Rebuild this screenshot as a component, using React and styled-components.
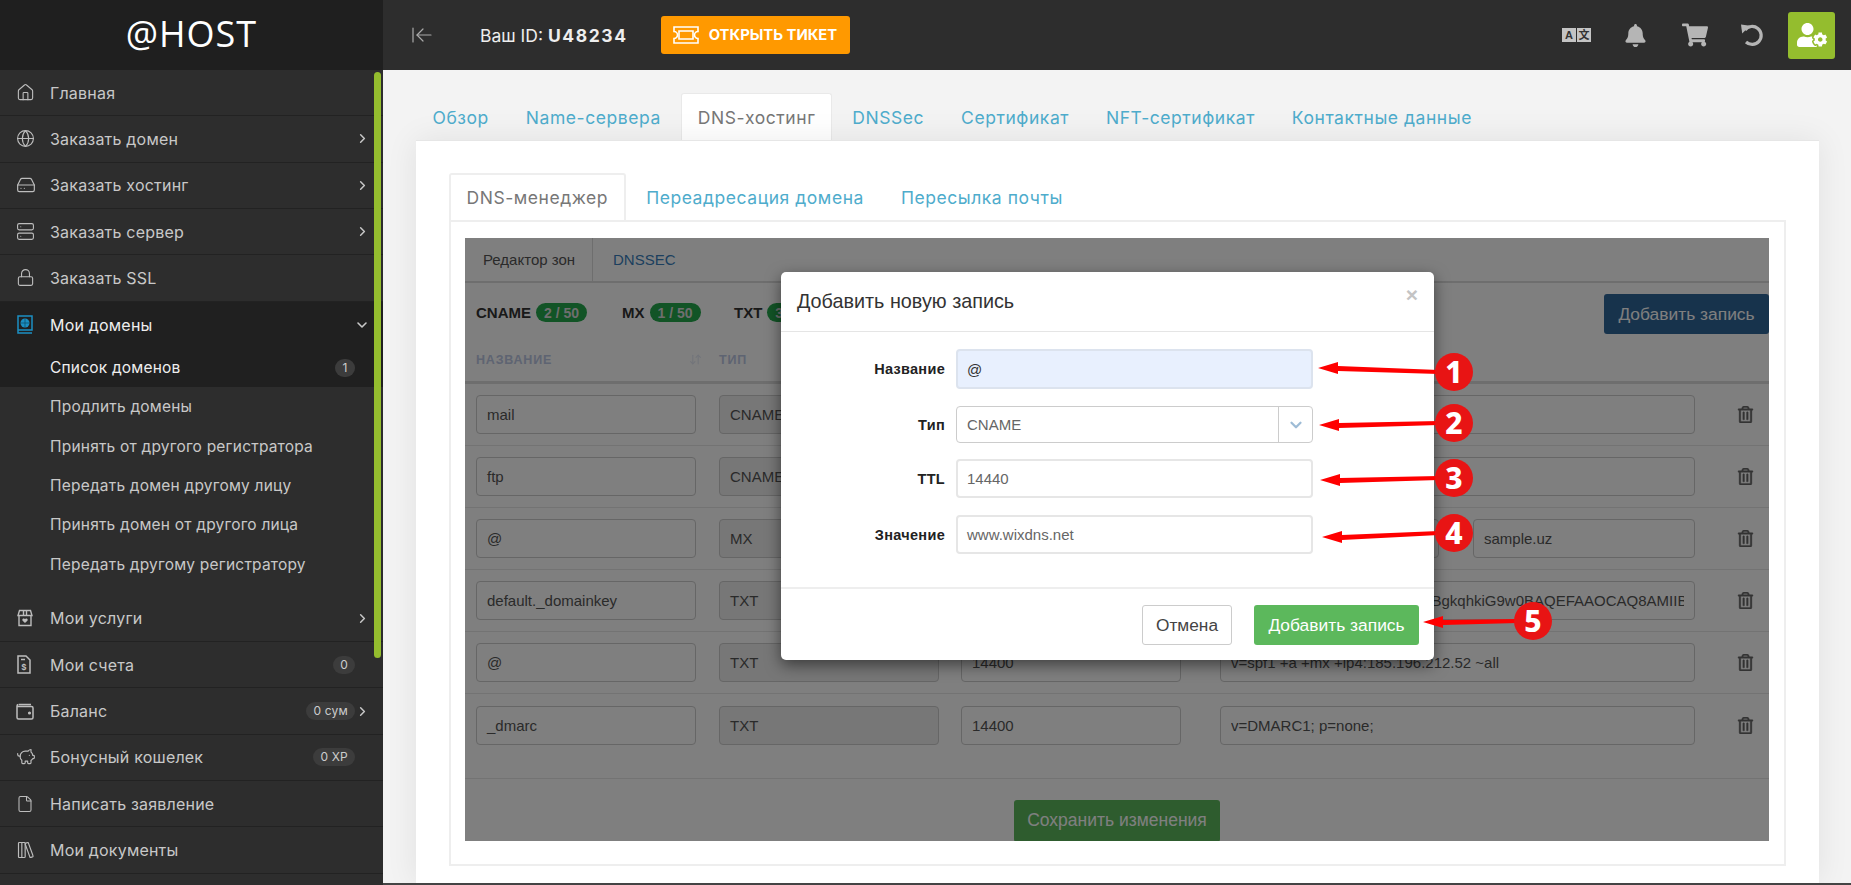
import React from 'react';
import styled, { createGlobalStyle } from 'styled-components';
import {
  House, Globe, HardDrive, Server, Lock, PiggyBank, File, LibraryBig,
  ChevronRight, ChevronDown, ArrowLeftToLine, ArrowDownUp,
} from 'lucide-react';
import { FaBell, FaShoppingCart, FaUserCog, FaRegTrashAlt } from 'react-icons/fa';

const GlobalStyle = createGlobalStyle`
  html, body { margin: 0; padding: 0; height: 100%; overflow: hidden; }
  body { font-family: "Liberation Sans", Arial, sans-serif; background: #f3f3f3; }
  * { box-sizing: border-box; }
`;

const UI = '"Inter", "Open Sans", sans-serif';

const Page = styled.div`
  display: flex;
  width: 1851px;
  height: 885px;
  overflow: hidden;
`;

/* ---------- sidebar ---------- */
const Sidebar = styled.aside`
  position: relative;
  flex: 0 0 383px;
  height: 885px;
  background: #2d2d2d;
  overflow: hidden;
  font-family: ${UI};
`;
const Logo = styled.div`
  height: 70px;
  background: #1f1f1f;
  color: #fff;
  font-family: "Open Sans", sans-serif;
  font-size: 36px;
  letter-spacing: 1px;
  line-height: 67px;
  text-align: center;
`;
const Scroll = styled.div`
  position: absolute;
  left: 374px;
  top: 72px;
  width: 7px;
  height: 586px;
  border-radius: 4px;
  background: #94bd2e;
`;
const NavRow = styled.div`
  display: flex;
  align-items: center;
  height: ${(p) => p.$h || 46.33}px;
  padding: 0 13px 0 16px;
  border-bottom: ${(p) => (p.$flat ? 'none' : '1px solid #222')};
  color: ${(p) => (p.$active ? '#eee' : '#c8c8c8')};
  background: ${(p) => (p.$active ? '#202020' : 'transparent')};
  font-size: 16px;
  letter-spacing: .2px;
  svg { flex: none; }
`;
const NavIcon = styled.span`
  display: flex;
  width: 34px;
  color: #bdbdbd;
`;
const NavText = styled.span`
  flex: 1;
  white-space: nowrap;
`;
const Count = styled.span`
  height: 18px;
  min-width: 20px;
  margin-right: 15px;
  padding: 0 7px;
  border-radius: 9px;
  background: #3c3c3c;
  color: #ccc;
  font-size: 12px;
  line-height: 18px;
  text-align: center;
`;
const CountArrow = styled(Count)`
  margin-right: 0;
`;
const Arrow = styled(ChevronRight)`
  color: #c8c8c8;
  margin-left: auto;
`;
const Open = styled(ChevronDown)`
  color: #c8c8c8;
  margin-left: auto;
`;
const SubList = styled.div`
  padding-bottom: 12px;
`;
const SubRow = styled(NavRow)`
  height: 39.3px;
  padding-left: 50px;
  font-size: 15.5px;
`;

const BookGlobe = () => (
  <svg width="18" height="20" viewBox="0 0 18 20" fill="none" stroke="#1b8fc2" strokeWidth="1.5">
    <path d="M2 1h14v14H2zM2 15v3h14" />
    <circle cx="9" cy="8" r="4.5" fill="#1b8fc2" stroke="none" />
    <path d="M4.5 8h9M9 3.5v9" stroke="#0c4a66" strokeWidth=".7" />
  </svg>
);
const GiftHeart = () => (
  <svg width="18" height="18" viewBox="0 0 18 18" fill="none" stroke="currentColor" strokeWidth="1.4">
    <path d="M3.5 1.5h11L16 6.5H2zM3 6.5h12v10H3zM7.5 1.5v5M10.5 1.5v5" />
    <path d="M9 14l-2.6-2.6a1.5 1.5 0 0 1 2.6-1.4 1.5 1.5 0 0 1 2.6 1.4z" fill="currentColor" stroke="none" />
  </svg>
);
const Receipt = () => (
  <svg width="16" height="19" viewBox="0 0 16 19" fill="none" stroke="currentColor" strokeWidth="1.5">
    <path d="M2 1h8l4 4v13H2zM5 4.5h4" />
    <text x="8" y="15" fontSize="8" fontWeight="700" fill="currentColor" stroke="none" textAnchor="middle">$</text>
  </svg>
);
const Wallet = () => (
  <svg width="18" height="17" viewBox="0 0 18 17" fill="none" stroke="currentColor" strokeWidth="1.5">
    <path d="M3 1.5h12M2.5 1.5A1.5 1.5 0 0 0 1 3v11.5A1.5 1.5 0 0 0 2.5 16h13a1.5 1.5 0 0 0 1.5-1.5V5a1.5 1.5 0 0 0-1.5-1.5H1" />
    <circle cx="13.5" cy="10" r=".8" fill="currentColor" />
  </svg>
);

/* ---------- top bar ---------- */
const Main = styled.main`
  flex: 1;
  min-width: 0;
  display: flex;
  flex-direction: column;
  height: 885px;
`;
const TopBar = styled.header`
  flex: 0 0 70px;
  display: flex;
  align-items: center;
  padding: 0 16px 0 27px;
  background: #2d2d2d;
  color: #eee;
  font-family: ${UI};
`;
const Collapse = styled(ArrowLeftToLine)`
  color: #aaa;
`;
const YourId = styled.span`
  margin-left: 46px;
  font-size: 17.5px;
  b { font-weight: 700; letter-spacing: 1.6px; }
`;
const TicketBtn = styled.div`
  display: flex;
  align-items: center;
  gap: 10px;
  height: 38px;
  margin-left: 33px;
  padding: 0 13px 0 12px;
  border-radius: 3px;
  background: #ff9900;
  color: #fff;
  font-size: 14.8px;
  font-weight: 700;
  white-space: nowrap;
`;
const TopIcons = styled.div`
  display: flex;
  align-items: center;
  margin-left: auto;
  color: #b5b5b5;
`;
const TopIcon = styled.span`
  display: flex;
  justify-content: center;
  width: ${(p) => p.$w}px;
`;
const LangBox = styled.span`
  display: inline-block;
  width: 14px;
  height: 14px;
  margin-left: 1px;
  background: #c4c4c4;
  color: #333;
  font: 700 11px/14px "Liberation Sans", "Noto Sans CJK SC", sans-serif;
  text-align: center;
`;
const UserBtn = styled.div`
  display: flex;
  align-items: center;
  justify-content: center;
  width: 47px;
  height: 47px;
  margin-left: 9px;
  border-radius: 3px;
  background: #94bd2e;
  color: #fff;
`;

/* ---------- tabs + card ---------- */
const Content = styled.div`
  flex: 1;
  min-height: 0;
  padding: 23px 32px 0 33px;
  background: #f3f3f3;
  display: flex;
  flex-direction: column;
`;
const Tabs = styled.div`
  display: flex;
  flex: none;
  height: 47px;
  font-family: ${UI};
  font-size: 17.5px;
  letter-spacing: .55px;
`;
const Tab = styled.div`
  display: flex;
  align-items: center;
  height: 47px;
  margin-right: 4px;
  padding: 0 15.5px;
  color: ${(p) => (p.$active ? '#777' : '#4eaccc')};
  background: ${(p) => (p.$active ? '#fff' : 'transparent')};
  border-radius: 3px 3px 0 0;
  border: ${(p) => (p.$active ? p.$line || '1px solid #e9e9e9' : '1px solid transparent')};
  border-bottom: none;
  white-space: nowrap;
`;
const Card = styled.section`
  flex: 1;
  min-height: 0;
  padding: 32px 33px 33px;
  background: #fff;
  border-top: 1px solid #e6e6e6;
  box-shadow: 0 0 30px rgba(0, 0, 0, .08);
`;
const InnerPanel = styled.div`
  height: 646px;
  padding: 16px 15px 25px 14px;
  border: 2px solid #eee;
`;
const Footer = styled.div`
  flex: 0 0 2px;
  margin: 0 -32px 0 -33px;
  background: #444;
`;

/* ---------- dimmed zone editor ---------- */
const Zone = styled.div`
  position: relative;
  height: 603px;
  overflow: hidden;
  background: #fff;
  color: #333;
`;
const Backdrop = styled.div`
  position: absolute;
  inset: 0;
  background: rgba(0, 0, 0, .5);
`;
const ZoneTabs = styled.div`
  display: flex;
  height: 45px;
  border-bottom: 2px solid #ddd;
  font-size: 15px;
`;
const ZoneTab = styled.div`
  display: flex;
  align-items: center;
  padding: 0 20px 0 ${(p) => (p.$active ? 18 : 20)}px;
  width: ${(p) => (p.$active ? '128px' : 'auto')};
  border-right: ${(p) => (p.$active ? '1px solid #ddd' : 'none')};
  color: ${(p) => (p.$active ? '#555' : '#387ebd')};
  white-space: nowrap;
`;
const Stats = styled.div`
  display: flex;
  align-items: flex-start;
  height: 57px;
  padding: 11px 0 0 11px;
  font-size: 15px;
  font-weight: 700;
`;
const Stat = styled.div`
  display: flex;
  align-items: center;
  height: 36px;
  gap: 5px;
  width: ${(p) => p.$w}px;
`;
const Pill = styled.span`
  height: 19px;
  padding: 0 8px;
  border-radius: 10px;
  background: #24a84c;
  color: #ddd;
  font-size: 14px;
  line-height: 20px;
  white-space: nowrap;
`;
const AddBtn = styled.div`
  margin-left: auto;
  width: 165px;
  height: 40px;
  border-radius: 3px;
  background: #2e6699;
  color: #fff;
  font-size: 17.4px;
  font-weight: 400;
  line-height: 40px;
  text-align: center;
`;
const HeadRow = styled.div`
  position: relative;
  display: grid;
  grid-template-columns: 243px 1fr;
  align-items: center;
  height: 44px;
  padding: 0 0 1px 11px;
  border-bottom: 3px solid #ddd;
  color: #bcc8e4;
  font-size: 12.5px;
  font-weight: 700;
  letter-spacing: .8px;
`;
const HeadCell = styled.div`
  display: flex;
  justify-content: space-between;
  width: 226px;
  svg { opacity: .4; }
`;
const Row = styled.div`
  display: grid;
  grid-template-columns: 243px 242px 259px 475px 1fr;
  align-items: center;
  height: ${(p) => p.$h || 62}px;
  padding: ${(p) => (p.$last ? '12px 0 33px 11px' : '0 0 0 11px')};
  border-bottom: 1px solid #e6e6e6;
  font-size: 15px;
`;
const Field = styled.div`
  width: ${(p) => p.$w || 220}px;
  height: 39px;
  padding: 0 10px;
  border: 1px solid #ccc;
  border-radius: 4px;
  background: ${(p) => (p.$off ? '#eee' : '#fff')};
  color: #555;
  line-height: 38px;
  white-space: nowrap;
  overflow: hidden;
`;
const ValueField = styled(Field)`
  width: 475px;
`;
const ClipText = styled.div`
  overflow: hidden;
`;
const PairField = styled.div`
  display: flex;
  justify-content: space-between;
  width: 475px;
`;
const Trash = styled(FaRegTrashAlt)`
  justify-self: start;
  margin-left: 42px;
  color: #666;
  stroke: currentColor;
  stroke-width: 12;
`;
const SaveWrap = styled.div`
  display: flex;
  justify-content: center;
  padding-top: 21px;
`;
const SaveBtn = styled.div`
  width: 206px;
  height: 42px;
  border-radius: 3px;
  background: #5cb85c;
  color: #fff;
  font-size: 17.5px;
  line-height: 40px;
  text-align: center;
`;

/* ---------- modal ---------- */
const Modal = styled.div`
  position: absolute;
  left: 316px;
  top: 34px;
  width: 653px;
  height: 388px;
  display: flex;
  flex-direction: column;
  border-radius: 5px;
  background: #fff;
  box-shadow: 0 5px 15px rgba(0, 0, 0, .5);
`;
const ModalHead = styled.div`
  display: flex;
  align-items: center;
  justify-content: space-between;
  flex: 0 0 60px;
  padding: 0 16px 0 16px;
  border-bottom: 1px solid #e5e5e5;
  color: #333;
  font-size: 19.8px;
`;
const Close = styled.span`
  margin-top: -14px;
  color: #c4c4c4;
  font-size: 21px;
  font-weight: 700;
`;
const ModalBody = styled.div`
  flex: 1;
  padding-top: 17px;
`;
const FormRow = styled.div`
  display: flex;
  align-items: center;
  height: ${(p) => p.$h}px;
  margin-bottom: ${(p) => p.$mb}px;
`;
const FormLabel = styled.div`
  width: 164px;
  margin-right: 11px;
  color: #222;
  font-size: 14.5px;
  font-weight: 700;
  letter-spacing: .3px;
  text-align: right;
`;
const FormInput = styled.div`
  display: flex;
  align-items: center;
  width: 357px;
  height: 100%;
  padding-left: 9px;
  border: 2px solid ${(p) => (p.$filled ? '#dce3ee' : '#e6e6e6')};
  border-radius: 4px;
  background: ${(p) => (p.$filled ? '#e8f0fe' : '#fff')};
  color: ${(p) => (p.$filled ? '#333' : '#666')};
  font-size: 15px;
`;
const SelectBox = styled(FormInput)`
  border: 1px solid #ccc;
  padding-left: 10px;
  padding-right: 0;
`;
const SelectArrow = styled.span`
  display: flex;
  align-items: center;
  justify-content: center;
  width: 34px;
  height: 100%;
  margin-left: auto;
  border-left: 1px solid #ccc;
  color: #9ebcd6;
`;
const ModalFoot = styled.div`
  display: flex;
  justify-content: flex-end;
  align-items: flex-start;
  gap: 22px;
  flex: 0 0 73px;
  padding: 16px 15px 0 0;
  border-top: 2px solid #eee;
`;
const CancelBtn = styled.div`
  width: 90px;
  height: 40px;
  border: 1px solid #ccc;
  border-radius: 3px;
  color: #444;
  font-size: 17.3px;
  line-height: 38px;
  text-align: center;
`;
const ConfirmBtn = styled.div`
  width: 165px;
  height: 40px;
  border-radius: 3px;
  background: #5cb85c;
  color: #fff;
  font-size: 17.4px;
  line-height: 40px;
  text-align: center;
`;

/* ---------- red numbered callouts ---------- */
const ArrowLayer = styled.svg`
  position: absolute;
  left: 0;
  top: 0;
  width: 100%;
  height: 100%;
  pointer-events: none;
`;
const Callout = styled.div`
  position: absolute;
  left: ${(p) => p.$x - 19}px;
  top: ${(p) => p.$y - 19}px;
  width: 38px;
  height: 38px;
  border-radius: 50%;
  background: #e81414;
  color: #fff;
  font-family: "Noto Sans", sans-serif;
  font-size: 30px;
  font-weight: 800;
  line-height: 38px;
  text-align: center;
`;

const Ticket = () => (
  <svg width="26" height="18" viewBox="0 0 26 18" fill="none" stroke="#fff" strokeWidth="1.6">
    <path d="M1 1h24v4.5a3.5 3.5 0 0 0 0 7V17H1v-4.5a3.5 3.5 0 0 0 0-7z" />
    <path d="M6 5h14v8H6z" />
  </svg>
);
const Undo = () => (
  <svg width="26" height="26" viewBox="0 0 26 26" fill="none" stroke="currentColor" strokeWidth="3.2">
    <path d="M6 8a9 9 0 1 1 1 12" />
    <path d="M2 2.5l9 1.2-7.8 7.8z" fill="currentColor" stroke="none" />
  </svg>
);

const topItems = [
  { icon: <House size={19} strokeWidth={1.4} />, label: 'Главная' },
  { icon: <Globe size={19} strokeWidth={1.4} />, label: 'Заказать домен', more: true },
  { icon: <HardDrive size={20} strokeWidth={1.4} />, label: 'Заказать хостинг', more: true },
  { icon: <Server size={19} strokeWidth={1.4} />, label: 'Заказать сервер', more: true },
  { icon: <Lock size={19} strokeWidth={1.4} />, label: 'Заказать SSL' },
];
const subItems = ['Продлить домены', 'Принять от другого регистратора', 'Передать домен другому лицу', 'Принять домен от другого лица', 'Передать другому регистратору'];
const bottomItems = [
  { icon: <GiftHeart />, label: 'Мои услуги', more: true },
  { icon: <Receipt />, label: 'Мои счета', badge: '0' },
  { icon: <Wallet />, label: 'Баланс', badge: '0 сум', more: true },
  { icon: <PiggyBank size={20} strokeWidth={1.4} />, label: 'Бонусный кошелек', badge: '0 XP' },
  { icon: <File size={18} strokeWidth={1.4} />, label: 'Написать заявление' },
  { icon: <LibraryBig size={20} strokeWidth={1.4} />, label: 'Мои документы' },
];

const records = [
  { name: 'mail', type: 'CNAME', ttl: '14400', value: '@' },
  { name: 'ftp', type: 'CNAME', ttl: '14400', value: '@' },
  { name: '@', type: 'MX', ttl: '14400', prio: '10', value: 'sample.uz' },
  { name: 'default._domainkey', type: 'TXT', ttl: '14400', value: 'v=DKIM1; k=rsa1; p=MIIBIjANBgkqhkiG9w0BAQEFAAOCAQ8AMIIBCgKCAQEA' },
  { name: '@', type: 'TXT', ttl: '14400', value: 'v=spf1 +a +mx +ip4:185.196.212.52 ~all' },
  { name: '_dmarc', type: 'TXT', ttl: '14400', value: 'v=DMARC1; p=none;' },
];

// coordinates are relative to the dimmed zone
const marks = [
  { n: 1, x: 989, y: 134, tipX: 853, tipY: 130 },
  { n: 2, x: 989, y: 185, tipX: 854, tipY: 187 },
  { n: 3, x: 989, y: 240, tipX: 855, tipY: 242 },
  { n: 4, x: 989, y: 295, tipX: 857, tipY: 299 },
  { n: 5, x: 1068, y: 383, tipX: 958, tipY: 384 },
];

const arrowShape = (m) => {
  const left = m.x - 15;
  const head = m.tipX + 20;
  return `${m.tipX},${m.tipY} ${head},${m.tipY - 6} ${head},${m.tipY - 2} ${left},${m.y - 2} ${left},${m.y + 2} ${head},${m.tipY + 3} ${head},${m.tipY + 6}`;
};

const NavItem = ({ item }) => (
  <NavRow>
    <NavIcon>{item.icon}</NavIcon>
    <NavText>{item.label}</NavText>
    {item.badge && (item.more ? <CountArrow>{item.badge}</CountArrow> : <Count>{item.badge}</Count>)}
    {item.more && <Arrow size={15} strokeWidth={2.4} />}
  </NavRow>
);

const App = () => (
  <Page>
    <GlobalStyle />
    <Sidebar>
      <Logo>@HOST</Logo>
      {topItems.map((item) => <NavItem item={item} key={item.label} />)}
      <NavRow $active $flat>
        <NavIcon><BookGlobe /></NavIcon>
        <NavText>Мои домены</NavText>
        <Open size={16} strokeWidth={2.4} />
      </NavRow>
      <SubList>
        <SubRow $active $flat>
          <NavText>Список доменов</NavText>
          <Count>1</Count>
        </SubRow>
        {subItems.map((label) => (
          <SubRow $flat key={label}><NavText>{label}</NavText></SubRow>
        ))}
      </SubList>
      {bottomItems.map((item) => <NavItem item={item} key={item.label} />)}
      <Scroll />
    </Sidebar>

    <Main>
      <TopBar>
        <Collapse size={24} strokeWidth={1.2} />
        <YourId>Ваш ID: <b>U48234</b></YourId>
        <TicketBtn><Ticket />ОТКРЫТЬ ТИКЕТ</TicketBtn>
        <TopIcons>
          <TopIcon $w={58}><LangBox>A</LangBox><LangBox>文</LangBox></TopIcon>
          <TopIcon $w={60}><FaBell size={23} /></TopIcon>
          <TopIcon $w={60}><FaShoppingCart size={26} /></TopIcon>
          <TopIcon $w={54}><Undo /></TopIcon>
          <UserBtn><FaUserCog size={30} /></UserBtn>
        </TopIcons>
      </TopBar>

      <Content>
        <Tabs>
          <Tab>Обзор</Tab>
          <Tab>Name-сервера</Tab>
          <Tab $active>DNS-хостинг</Tab>
          <Tab>DNSSec</Tab>
          <Tab>Сертификат</Tab>
          <Tab>NFT-сертификат</Tab>
          <Tab>Контактные данные</Tab>
        </Tabs>
        <Card>
          <Tabs>
            <Tab $active $line="2px solid #eee">DNS-менеджер</Tab>
            <Tab>Переадресация домена</Tab>
            <Tab>Пересылка почты</Tab>
          </Tabs>
          <InnerPanel>
            <Zone>
              <ZoneTabs>
                <ZoneTab $active>Редактор зон</ZoneTab>
                <ZoneTab>DNSSEC</ZoneTab>
              </ZoneTabs>
              <Stats>
                <Stat $w={146}>CNAME <Pill>2 / 50</Pill></Stat>
                <Stat $w={112}>MX <Pill>1 / 50</Pill></Stat>
                <Stat $w={100}>TXT <Pill>3 / 50</Pill></Stat>
                <AddBtn>Добавить запись</AddBtn>
              </Stats>
              <HeadRow>
                <HeadCell>НАЗВАНИЕ <ArrowDownUp size={13} /></HeadCell>
                <div>ТИП</div>
              </HeadRow>
              {records.map((r, i) => (
                <Row key={i} $last={i === records.length - 1} $h={i === records.length - 1 ? 85 : 62}>
                  <Field>{r.name}</Field>
                  <Field $off>{r.type}</Field>
                  <Field>{r.ttl}</Field>
                  {r.prio ? (
                    <PairField>
                      <Field $w={219}>{r.prio}</Field>
                      <Field $w={222}>{r.value}</Field>
                    </PairField>
                  ) : (
                    <ValueField><ClipText>{r.value}</ClipText></ValueField>
                  )}
                  <Trash size={17} />
                </Row>
              ))}
              <SaveWrap><SaveBtn>Сохранить изменения</SaveBtn></SaveWrap>
              <Backdrop />

              <Modal>
                <ModalHead>Добавить новую запись<Close>×</Close></ModalHead>
                <ModalBody>
                  <FormRow $h={40} $mb={17}>
                    <FormLabel>Название</FormLabel>
                    <FormInput $filled>@</FormInput>
                  </FormRow>
                  <FormRow $h={37} $mb={16}>
                    <FormLabel>Тип</FormLabel>
                    <SelectBox>CNAME<SelectArrow><ChevronDown size={18} strokeWidth={3} /></SelectArrow></SelectBox>
                  </FormRow>
                  <FormRow $h={39} $mb={17}>
                    <FormLabel>TTL</FormLabel>
                    <FormInput>14440</FormInput>
                  </FormRow>
                  <FormRow $h={39} $mb={0}>
                    <FormLabel>Значение</FormLabel>
                    <FormInput>www.wixdns.net</FormInput>
                  </FormRow>
                </ModalBody>
                <ModalFoot>
                  <CancelBtn>Отмена</CancelBtn>
                  <ConfirmBtn>Добавить запись</ConfirmBtn>
                </ModalFoot>
              </Modal>

              <ArrowLayer>
                {marks.map((m) => <polygon key={m.n} points={arrowShape(m)} fill="#f00" />)}
              </ArrowLayer>
              {marks.map((m) => <Callout key={m.n} $x={m.x} $y={m.y}>{m.n}</Callout>)}
            </Zone>
          </InnerPanel>
        </Card>
        <Footer />
      </Content>
    </Main>
  </Page>
);

export default App;
